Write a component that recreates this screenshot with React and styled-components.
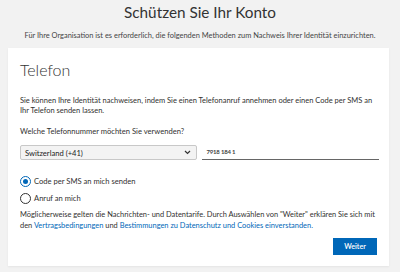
import React, { useState } from 'react'
import styled, { createGlobalStyle } from 'styled-components'

const GlobalStyle = createGlobalStyle`
    html, body {
        margin: 0;
        padding: 0;
        background: #f2f2f2;
    }
    body {
        font-family: Lato, "Noto Sans", sans-serif;
        color: #323130;
    }
`;

function App() {
    const [method, setMethod] = useState('sms')   // gewählte Methode

    return (
        <Page>
            <GlobalStyle />
            <Title>Schützen Sie Ihr Konto</Title>
            <Subtitle>Für Ihre Organisation ist es erforderlich, die folgenden Methoden zum Nachweis Ihrer Identität einzurichten.</Subtitle>
            <Card>
                <CardTitle>Telefon</CardTitle>
                <Text>
                    Sie können Ihre Identität nachweisen, indem Sie einen Telefonanruf annehmen oder einen Code per SMS an Ihr Telefon senden lassen.
                </Text>
                <Question>Welche Telefonnummer möchten Sie verwenden?</Question>
                <PhoneRow>
                    <SelectBox>
                        <span>Switzerland (+41)</span>
                        <svg width="7" height="5" viewBox="0 0 7 5">
                            <path d="M1 1l2.5 2.5L6 1" fill="none" stroke="#333" strokeWidth="1.2" />
                        </svg>
                    </SelectBox>
                    <NumberField>
                        <span>7918 184 1</span>
                    </NumberField>
                </PhoneRow>
                <Options>
                    <Option onClick={() => setMethod('sms')}>
                        <Radio checked={method === 'sms'} />
                        Code per SMS an mich senden
                    </Option>
                    <Option onClick={() => setMethod('call')}>
                        <Radio checked={method === 'call'} />
                        Anruf an mich
                    </Option>
                </Options>
                <Disclaimer>
                    Möglicherweise gelten die Nachrichten- und Datentarife. Durch Auswählen von "Weiter" erklären Sie sich mit den <Link>Vertragsbedingungen</Link> und <Link>Bestimmungen zu Datenschutz und Cookies einverstanden.</Link>
                </Disclaimer>
                <Footer>
                    <Button>Weiter</Button>
                </Footer>
            </Card>
        </Page>
    );
}

export default App;


const Page = styled.div`
    width: 400px;
    height: 272px;
    overflow: hidden;
    display: flex;
    flex-direction: column;
`;

const Title = styled.h1`
    margin: 0;
    padding-top: 1px;
    text-align: center;
    font-size: 15.3px;
    line-height: 22px;
    font-weight: 400;
    color: #333;
`;

const Subtitle = styled.p`
    margin: 8px 0 0;
    text-align: center;
    font-size: 7.45px;
    line-height: 10px;
    color: #444;
`;

const Card = styled.div`
    margin: 7px 0 0 8px;
    width: 381px;
    height: 218px;
    box-sizing: border-box;
    padding: 11px 10px 0 12px;
    background: #fff;
    box-shadow: 0 1px 2px rgba(0, 0, 0, 0.06);
    display: flex;
    flex-direction: column;
`;

const CardTitle = styled.h2`
    margin: 0;
    font-size: 16px;
    line-height: 22px;
    font-weight: 300;
    color: #333;
`;

const Text = styled.p`
    margin: 15px 0 0;
    font-size: 7.5px;
    line-height: 10px;
`;

const Question = styled.p`
    margin: 10px 0 0;
    font-size: 7.6px;
    line-height: 10px;
`;

const PhoneRow = styled.div`
    display: flex;
    align-items: flex-end;
    gap: 5px;
    margin-top: 9px;
`;

const SelectBox = styled.div`
    width: 178px;
    height: 15px;
    box-sizing: border-box;
    border: 1px solid #c8c8c8;
    border-radius: 2px;
    background: #f3f3f3;
    display: flex;
    align-items: center;
    justify-content: space-between;
    padding: 0 5px 0 4px;
    font-size: 7.6px;
    color: #222;
`;

const NumberField = styled.div`
    width: 179px;
    height: 15px;
    box-sizing: border-box;
    border-bottom: 1px solid #666;
    display: flex;
    align-items: center;
    padding: 0 0 1px 5px;
    font-size: 6px;
    font-weight: 700;
    letter-spacing: -0.2px;
    color: #444;
`;

const Options = styled.div`
    display: flex;
    flex-direction: column;
    gap: 6px;
    margin-top: 16px;
`;

const Option = styled.label`
    display: flex;
    align-items: center;
    gap: 3px;
    font-size: 7.6px;
    line-height: 11px;
    cursor: pointer;
`;

const Radio = styled.span`
    width: 11px;
    height: 11px;
    box-sizing: border-box;
    border-radius: 50%;
    border: 1px solid ${p => p.checked ? '#0067b8' : '#333'};
    display: flex;
    align-items: center;
    justify-content: center;

    &::after {
        content: '';
        width: 5px;
        height: 5px;
        border-radius: 50%;
        background: ${p => p.checked ? '#0067b8' : 'transparent'};
    }
`;

const Disclaimer = styled.p`
    margin: 5px 0 0;
    font-size: 7.45px;
    line-height: 11px;
`;

const Link = styled.a`
    color: #0067b8;
    text-decoration: none;
`;

const Footer = styled.div`
    display: flex;
    justify-content: flex-end;
    margin-top: 7px;
    padding-right: 2px;
`;

const Button = styled.button`
    width: 44px;
    height: 17px;
    border: none;
    background: #0067b8;
    color: #fff;
    font-family: inherit;
    font-size: 7.2px;
    font-weight: 600;
    padding: 0;
`;
